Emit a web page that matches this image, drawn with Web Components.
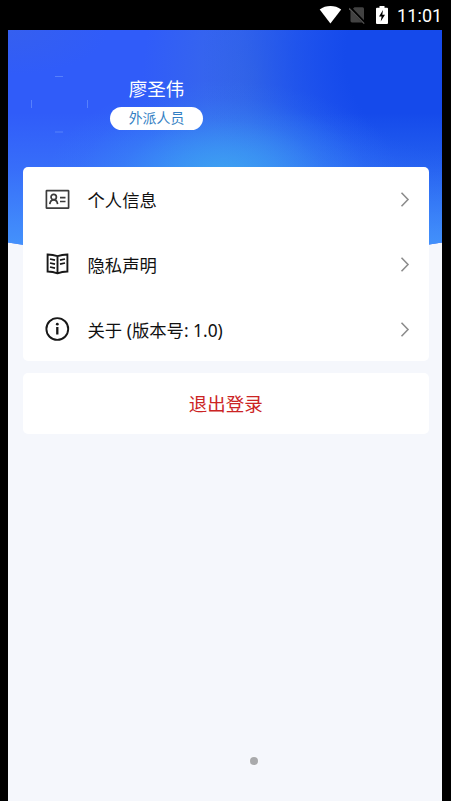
<!DOCTYPE html>
<html lang="zh-CN">
<head>
<meta charset="utf-8">
<title>个人中心</title>
<style>
html,body{margin:0;height:100%;background:#000}
body{font-family:"Noto Sans","Noto Sans CJK SC",sans-serif;overflow:hidden}
</style>
</head>
<body>
<profile-app></profile-app>
<script>
const define = (name, markup) => {
  const template = document.createElement('template');
  template.innerHTML = markup;
  customElements.define(name, class extends HTMLElement {
    constructor() {
      super();
      this.attachShadow({mode: 'open'}).append(template.content.cloneNode(true));
    }
  });
};

define('status-bar', `
<style>
:host{display:flex;height:30px;box-sizing:border-box;padding-right:10px;justify-content:flex-end;align-items:center;background:#000;color:#fff;font-family:Roboto,sans-serif}
svg{display:block;flex:none}
.wifi{margin-right:7px}.sim{margin-right:10px}.battery{margin-right:9px}
time{font-size:18px;line-height:30px;letter-spacing:.1px;padding-top:2px;width:44px;white-space:nowrap}
</style>
<svg class="wifi" width="23" height="30" viewBox="0 0 23 30"><path d="M.7 9.400C6.800 4.900 16 4.900 22.200 9.400L11.400 23.400Z" fill="#fff"/></svg>
<svg class="sim" width="17" height="30" viewBox="0 0 17 30"><path d="M1.500 11L5.500 7.200H13.500Q15 7.200 15 8.700V22.400H3Q1.500 22.400 1.500 21Z" fill="#424242"/><path d="M.8 7.500L16 23.500" stroke="#000" stroke-width="3"/><path d="M0 8.200L15.200 23.600" stroke="#555" stroke-width="1.300"/></svg>
<svg class="battery" width="12" height="30" viewBox="0 0 12 30"><path d="M3.500 6h5v1.800H11q1 0 1 1V23q0 1-1 1H1q-1 0-1-1V8.800q0-1 1-1h2.500Z" fill="#fff"/><path d="M7 10L3 16.500h2.600L4.700 21.500L9 14.700H6.300Z" fill="#000"/></svg>
<time>11:01</time>`);

define('avatar-frame', `
<style>:host{display:block;width:58px;height:58px}svg{display:block}</style>
<svg width="58" height="58" viewBox="0 0 58 58" fill="none" stroke="#7199ff" stroke-width="1" opacity=".6"><path d="M25 1.500h8M25 57h8M1.500 25v8M57.500 25v8"/></svg>`);

define('role-badge', `
<style>:host{display:flex;justify-content:center;align-items:center;width:93px;height:23px;border-radius:12px;background:#fff;color:#347fc4;font-size:13.900px;line-height:20px;box-sizing:border-box;padding-bottom:1px}</style><slot></slot>`);

define('profile-header', `
<style>
:host{display:flex;height:230px;align-items:flex-start;box-sizing:border-box;padding:45px 0 0 22px;color:#fff;
clip-path:ellipse(567px 230px at 50% 0);
background:
radial-gradient(ellipse 175px 95px at 215px 145px,rgba(62,168,241,.9) 0%,rgba(60,162,243,.68) 28%,rgba(59,155,243,.3) 58%,rgba(59,150,243,.08) 82%,transparent 100%),
linear-gradient(180deg,transparent 36%,rgba(72,150,250,.3) 60%,rgba(72,158,252,.92) 100%),
radial-gradient(ellipse 240px 230px at 100% 12%,#154aeb 40%,rgba(21,76,235,.65) 62%,rgba(23,78,235,.2) 85%,transparent 100%),
radial-gradient(ellipse 110px 165px at 245px 45px,#3a6be6,transparent),
radial-gradient(ellipse 100px 45px at 0 0,#355fef,transparent),#305cf9}
.person{display:flex;flex-direction:column;align-items:center;margin-left:22px}
.name{font-size:18.500px;line-height:27px;margin-bottom:4.500px}
</style>
<avatar-frame></avatar-frame><div class="person"><div class="name"><slot></slot></div><role-badge><slot name="role"></slot></role-badge></div>`);

define('panel-card', `
<style>:host{display:block;background:#fff;border-radius:5px;overflow:hidden}</style><slot></slot>`);

define('menu-row', `
<style>
:host{display:flex;height:65px;align-items:center;padding:0 19px 0 22px;color:#111;font-size:17.350px;line-height:26px}
.label{flex:1;margin-left:18px;padding-top:1px}
::slotted(svg){width:25px;height:26px;display:block;flex:none}
.arrow{display:block}
</style>
<slot name="icon"></slot><span class="label"><slot></slot></span>
<svg class="arrow" width="10" height="16" viewBox="0 0 10 16"><path d="M1.500 1.800L8 8.500L1.500 15.200" fill="none" stroke="#8d8d8d" stroke-width="1.600"/></svg>`);

define('logout-button', `
<style>:host{display:flex;align-items:center;justify-content:center;height:61px;color:#cb2424;font-size:18.500px;line-height:28px;box-sizing:border-box;padding-top:1px}</style><slot></slot>`);

define('touch-dot', `
<style>:host{display:block;width:8px;height:8px;border-radius:50%;background:#a9aaac;box-shadow:0 0 2px #fff}</style>`);

define('profile-app', `
<style>
:host{display:flex;flex-direction:column;width:451px;height:801px;background:#000}
main{display:flex;flex-direction:column;flex:1;margin:0 9px 0 8px;background:#f5f7fc}
.content{display:flex;flex-direction:column;gap:12px;margin:-93.500px 13px 0 14.500px;position:relative}
.menu{height:194.500px}
.end{display:flex;justify-content:center;margin:auto 0 36px;padding-left:57px}
</style>
<status-bar></status-bar>
<main>
<profile-header>廖圣伟<span slot="role">外派人员</span></profile-header>
<div class="content">
<panel-card class="menu">
<menu-row><svg slot="icon" viewBox="0 0 25 26" fill="none" stroke="#3c3c3c" stroke-width="1.700"><rect x="1.400" y="4.600" width="22.200" height="17.600" rx=".5"/><circle cx="8.700" cy="11" r="2.700"/><path d="M4.800 18.200Q5.200 13.800 8.700 13.800T12.600 18.200M15 11.700h5.500M15 15.500h5.500"/></svg>个人信息</menu-row>
<menu-row><svg slot="icon" viewBox="0 0 25 26" fill="none" stroke="#181818" stroke-width="1.900"><path d="M12.500 5.200Q8 3.700 2.600 3.500V20.500Q8 20.700 12.500 22.300Q17 20.700 22.400 20.500V3.500Q17 3.700 12.500 5.200V22"/><path d="M5 8l5 1.200M5 12l5 1.200M5 16l5 1.200M20 8l-5 1.200M20 12l-5 1.200" stroke-width="1.700"/></svg>隐私声明</menu-row>
<menu-row><svg slot="icon" viewBox="0 0 25 26" fill="none" stroke="#181818" stroke-width="1.900"><circle cx="12.300" cy="13" r="10.900"/><path d="M12.300 11v7.500" stroke-width="2.300"/><circle cx="12.300" cy="8.200" r="1.400" fill="#181818" stroke="none"/></svg>关于 (版本号: 1.0)</menu-row>
</panel-card>
<panel-card><logout-button>退出登录</logout-button></panel-card>
</div>
<div class="end"><touch-dot></touch-dot></div>
</main>`);
</script>
</body>
</html>
